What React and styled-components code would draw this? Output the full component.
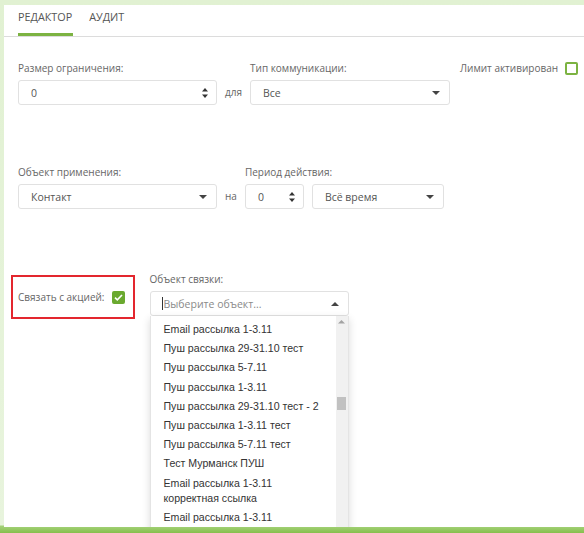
import styled, { createGlobalStyle } from "styled-components"

const GlobalStyle = createGlobalStyle`
  html, body {
    margin: 0;
    padding: 0;
    background: #ffffff;
  }
  * {
    box-sizing: border-box;
  }
`

const colors = {
  green: "#7cb342",
  greenDark: "#6aa92f",
  text: "#555555",
  label: "#666666",
  border: "#e1e1e1",
  list: "#333333",
  red: "#e3262e"
}

const Frame = styled.div`
  width: 584px;
  height: 533px;
  padding: 5px 0 6px 4px;
  background: linear-gradient(
    to bottom,
    #e1f1d2 0,
    #e8f4dd calc(100% - 8px),
    #a5d27a calc(100% - 7px),
    #86bf4c 100%
  );
`

const Panel = styled.div`
  height: 100%;
  background: #ffffff;
  overflow: hidden;
  font-family: "Open Sans", "Liberation Sans", sans-serif;
  color: ${colors.text};
`

const TabBar = styled.div`
  display: flex;
  gap: 16px;
  height: 32px;
  padding: 0 14px;
  border-bottom: 1px solid #dcdcdc;
`

const Tab = styled.div`
  height: 31px;
  padding: 4px 1px 0 0;
  font-size: 10.8px;
  line-height: 16px;
  text-transform: uppercase;
  color: #555;
  border-bottom: 3px solid ${(p) => (p.$active ? colors.green : "transparent")};
`

const Form = styled.div`
  padding: 0 14px;
`

const Row = styled.div`
  display: flex;
  align-items: flex-start;
  margin-top: ${(p) => p.$top}px;
`

const Field = styled.div`
  display: flex;
  flex-direction: column;
  flex-shrink: 0;
  gap: 5px;
  width: ${(p) => p.$width}px;
`

const Label = styled.div`
  font-size: 10px;
  line-height: 14px;
  color: ${colors.label};
  white-space: nowrap;
`

const Connector = styled.div`
  align-self: flex-end;
  height: 25px;
  line-height: 25px;
  padding: 0 8px;
  font-size: 10px;
  color: ${colors.label};
`

const Box = styled.div`
  position: relative;
  display: flex;
  align-items: center;
  justify-content: space-between;
  height: 25px;
  width: 100%;
  padding: 0 9px 0 12px;
  border: 1px solid ${colors.border};
  border-radius: 3px;
  background: #fff;
  font-size: 10.5px;
  color: ${colors.text};
`

const Placeholder = styled.span`
  display: flex;
  align-items: center;
  margin-left: -1px;
  color: #8a8a8a;

  &::before {
    content: "";
    display: block;
    width: 1px;
    height: 13px;
    margin-right: 1px;
    background: #333;
  }
`

const Gap = styled.div`
  width: ${(p) => p.$w}px;
  flex-shrink: 0;
`

const LimitGroup = styled.div`
  display: flex;
  align-items: center;
  gap: 7px;
  margin-left: 10px;
  font-size: 10px;
  line-height: 14px;
  color: ${colors.label};
  white-space: nowrap;
`

const Check = styled.span`
  display: inline-flex;
  align-items: center;
  justify-content: center;
  flex-shrink: 0;
  width: 13px;
  height: 13px;
  border-radius: 2px;
  border: 2px solid ${(p) => (p.$checked ? colors.greenDark : colors.green)};
  background: ${(p) => (p.$checked ? colors.greenDark : "#fff")};
`

const Highlight = styled.div`
  display: flex;
  align-items: center;
  flex-shrink: 0;
  gap: 7px;
  height: 44px;
  margin: 3px 15px 0 -7px;
  padding: 0 8px 0 5px;
  border: 2px solid ${colors.red};
  font-size: 10px;
  color: ${colors.label};
  white-space: nowrap;
`

const SelectWrap = styled.div`
  position: relative;
`

const Dropdown = styled.div`
  position: absolute;
  top: 25px;
  left: 0;
  width: 199px;
  height: 240px;
  display: flex;
  background: #fff;
  border: 1px solid #e4e4e4;
  border-top: none;
  box-shadow: 0 3px 8px rgba(0, 0, 0, 0.15);
  font-family: "Liberation Sans", Arial, sans-serif;
`

const Options = styled.ul`
  flex: 1;
  margin: 0;
  padding: 4px 0 0 13px;
  list-style: none;
`

const Option = styled.li`
  padding: 2px 0;
  font-size: 10.6px;
  line-height: 15.2px;
  color: ${colors.list};
  white-space: nowrap;
`

const Scrollbar = styled.div`
  width: 12px;
  background: #f1f1f1;
  display: flex;
  flex-direction: column;
  align-items: center;
  padding-top: 4px;
`

const Thumb = styled.div`
  width: 9px;
  height: 13px;
  margin-top: 73px;
  background: #c1c1c1;
`

function CaretDown() {
  return (
    <svg width="8" height="4" viewBox="0 0 8 4">
      <path d="M0 0h8L4 4z" fill="#444" />
    </svg>
  )
}

function CaretUp({ color = "#444", size = 8 }) {
  return (
    <svg width={size} height={size / 2} viewBox="0 0 8 4">
      <path d="M0 4h8L4 0z" fill={color} />
    </svg>
  )
}

function Spinner() {
  return (
    <svg width="8" height="12" viewBox="0 0 8 12" style={{ marginRight: -2 }}>
      <path d="M1 4.5h6L4 1z" fill="#333" />
      <path d="M1 7.5h6L4 11z" fill="#333" />
    </svg>
  )
}

function CheckMark() {
  return (
    <svg width="9" height="7" viewBox="0 0 9 7">
      <path
        d="M1 3.6l2.3 2.2L8 1"
        fill="none"
        stroke="#fff"
        strokeWidth="1.6"
      />
    </svg>
  )
}

const options = [
  ["Email рассылка 1-3.11"],
  ["Пуш рассылка 29-31.10 тест"],
  ["Пуш рассылка 5-7.11"],
  ["Пуш рассылка 1-3.11"],
  ["Пуш рассылка 29-31.10 тест - 2"],
  ["Пуш рассылка 1-3.11 тест"],
  ["Пуш рассылка 5-7.11 тест"],
  ["Тест Мурманск ПУШ"],
  ["Email рассылка 1-3.11", "корректная ссылка"],
  ["Email рассылка 1-3.11"]
]

export default function App() {
  return (
    <>
      <GlobalStyle />
      <Frame>
        <Panel>
          <TabBar>
            <Tab $active>Редактор</Tab>
            <Tab>Аудит</Tab>
          </TabBar>

          <Form>
            <Row $top={24}>
              <Field $width={199}>
                <Label>Размер ограничения:</Label>
                <Box>
                  <span>0</span>
                  <Spinner />
                </Box>
              </Field>
              <Connector>для</Connector>
              <Field $width={200}>
                <Label>Тип коммуникации:</Label>
                <Box>
                  <span>Все</span>
                  <CaretDown />
                </Box>
              </Field>
              <LimitGroup>
                Лимит активирован
                <Check />
              </LimitGroup>
            </Row>

            <Row $top={60}>
              <Field $width={199}>
                <Label>Объект применения:</Label>
                <Box>
                  <span>Контакт</span>
                  <CaretDown />
                </Box>
              </Field>
              <Connector>на</Connector>
              <Field $width={59}>
                <Label>Период действия:</Label>
                <Box>
                  <span>0</span>
                  <Spinner />
                </Box>
              </Field>
              <Gap $w={8} />
              <Field $width={132}>
                <Label>&nbsp;</Label>
                <Box>
                  <span>Всё время</span>
                  <CaretDown />
                </Box>
              </Field>
            </Row>

            <Row $top={63}>
              <Highlight>
                Связать с акцией:
                <Check $checked>
                  <CheckMark />
                </Check>
              </Highlight>
              <Field $width={199}>
                <Label>Объект связки:</Label>
                <SelectWrap>
                  <Box>
                    <Placeholder>Выберите объект...</Placeholder>
                    <CaretUp />
                  </Box>
                  <Dropdown>
                    <Options>
                      {options.map((lines, i) => (
                        <Option key={i}>
                          {lines.map((l, j) => (
                            <div key={j}>{l}</div>
                          ))}
                        </Option>
                      ))}
                    </Options>
                    <Scrollbar>
                      <CaretUp color="#a3a3a3" size={7} />
                      <Thumb />
                    </Scrollbar>
                  </Dropdown>
                </SelectWrap>
              </Field>
            </Row>
          </Form>
        </Panel>
      </Frame>
    </>
  )
}
